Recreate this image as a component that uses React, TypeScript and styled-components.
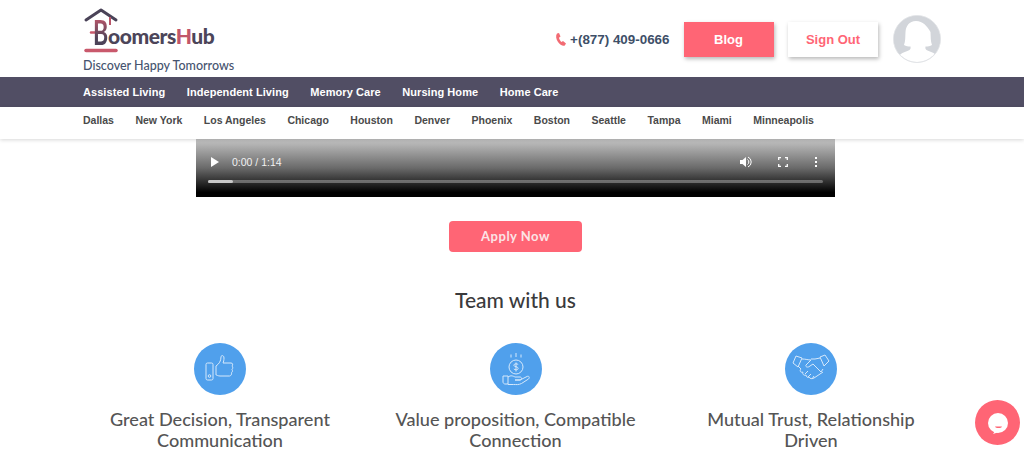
import React from 'react'
import styled, { createGlobalStyle } from 'styled-components'

const mainLinks = ['Assisted Living', 'Independent Living', 'Memory Care', 'Nursing Home', 'Home Care']
const cities = ['Dallas', 'New York', 'Los Angeles', 'Chicago', 'Houston', 'Denver', 'Phoenix', 'Boston', 'Seattle', 'Tampa', 'Miami', 'Minneapolis']

const GlobalStyle = createGlobalStyle`
  html, body {
    margin: 0;
    padding: 0;
    height: 458px;
    overflow: hidden;
    background: #fff;
    font-family: 'Liberation Sans', Arial, sans-serif;
  }
`

const Header = styled.header`
  height: 77px;
  padding: 0 83px 0 83px;
  display: flex;
  justify-content: space-between;
  box-sizing: border-box;
`

const LogoBlock = styled.div`
  display: flex;
  flex-direction: column;
  width: 170px;
`

const LogoMark = styled.div`
  position: relative;
  height: 53px;
  margin-top: 7px;
`

const LogoBig = styled.span`
  position: absolute;
  left: 10px;
  top: 8px;
  font: 700 34px/34px Lato, sans-serif;
  color: transparent;
  background: linear-gradient(#b9566a 10%, #4d4358 70%);
  -webkit-background-clip: text;
  background-clip: text;
  transform: scaleX(0.68);
  transform-origin: left center;
`

const LogoWord = styled.span`
  position: absolute;
  left: 25px;
  top: 15px;
  font: 900 21px/28px Lato, sans-serif;
  letter-spacing: -0.42px;
  color: #4c4559;
  white-space: nowrap;
`

const LogoAccent = styled.span`
  color: #c1566a;
`

const Tagline = styled.div`
  font: 500 12.5px/16px Lato, sans-serif;
  color: #46546f;
  margin-top: -2px;
  white-space: nowrap;
`

const HeaderRight = styled.div`
  display: flex;
  align-items: flex-start;
  padding-top: 15px;
`

const Phone = styled.div`
  display: flex;
  align-items: center;
  gap: 3px;
  height: 34px;
  margin-top: 7px;
  margin-right: 14px;
  font-size: 13.4px;
  font-weight: 700;
  color: #3e4f68;
  white-space: nowrap;
`

const HeaderButton = styled.a<{ $outline?: boolean }>`
  display: flex;
  align-items: center;
  justify-content: center;
  width: 90px;
  height: 35px;
  margin-top: 7px;
  font-size: 13px;
  font-weight: 700;
  color: ${({ $outline }) => ($outline ? '#ff6575' : '#fff')};
  background: ${({ $outline }) => ($outline ? '#fff' : '#ff6575')};
  box-shadow: 1px 2px 4px rgba(0, 0, 0, 0.28);
  margin-left: ${({ $outline }) => ($outline ? '14.500px' : '0')};
`

const Avatar = styled.div`
  width: 48px;
  height: 48px;
  margin-left: 15px;
  border-radius: 50%;
  border: 1px solid #e3e5e8;
  box-sizing: border-box;
  overflow: hidden;
  background: #d2d5da;
`

const MainNav = styled.nav`
  height: 30px;
  box-sizing: border-box;
  padding: 0 0 1px 83px;
  background: #514e64;
  display: flex;
  align-items: center;
  gap: 21.6px;
  font-size: 11px;
  font-weight: 700;
  letter-spacing: 0.06px;
  color: #fff;
`

const CityNav = styled.nav`
  height: 32px;
  box-sizing: border-box;
  padding: 0 0 6px 83px;
  background: #fff;
  display: flex;
  align-items: center;
  gap: 21.5px;
  font-size: 10.5px;
  font-weight: 700;
  color: #4a4a4a;
  box-shadow: 0 1px 4px rgba(0, 0, 0, 0.16);
  position: relative;
  z-index: 1;
`

const Main = styled.main`
  display: flex;
  flex-direction: column;
  align-items: center;
  padding-left: 7px;
`

const Player = styled.div`
  width: 639px;
  height: 58px;
  box-sizing: border-box;
  background: linear-gradient(#c4c4c4, #6a6a6a 50%, #000 92%);
  padding: 15px 12px 0 12px;
  color: #fff;
`

const PlayerRow = styled.div`
  display: flex;
  align-items: center;
  height: 16px;
  padding: 0 5px 0 3px;
  font-size: 10.5px;
`

const TimeText = styled.span`
  margin-left: 13px;
  flex: 1;
  color: #f1f1f1;
`

const PlayerIcons = styled.div`
  display: flex;
  align-items: center;
  gap: 26px;
`

const Track = styled.div`
  margin-top: 10px;
  height: 3px;
  border-radius: 2px;
  background: rgba(255, 255, 255, 0.3);
`

const TrackFill = styled.div`
  height: 3px;
  background: #c8c8c8;
  border-radius: 2px;
`

const ApplyButton = styled.a`
  margin-top: 24px;
  width: 133px;
  height: 31px;
  box-sizing: border-box;
  padding-bottom: 1px;
  border-radius: 4px;
  background: #ff6575;
  color: #fbe4e6;
  display: flex;
  align-items: center;
  justify-content: center;
  font: 700 13px Lato, sans-serif;
  letter-spacing: 0.5px;
`

const Heading = styled.h2`
  margin: 35px 0 0;
  font: 500 21px/26px Lato, sans-serif;
  color: #3a3a3c;
`

const Features = styled.div`
  display: grid;
  grid-template-columns: repeat(3, 295.5px);
  margin-top: 30px;
`

const Feature = styled.div`
  display: flex;
  flex-direction: column;
  align-items: center;
`

const IconCircle = styled.div`
  width: 52px;
  height: 52px;
  border-radius: 50%;
  background: #50a0ec;
  display: flex;
  align-items: center;
  justify-content: center;
`

const FeatureTitle = styled.div`
  margin-top: 14px;
  width: 250px;
  text-align: center;
  font: 500 18.100px/21px Lato, sans-serif;
  color: #555;
`

const ChatBubble = styled.div`
  position: fixed;
  left: 975px;
  top: 400px;
  width: 45px;
  height: 45px;
  border-radius: 50%;
  background: #ff6575;
  display: flex;
  align-items: center;
  justify-content: center;
`

const ThumbsIcon = () => (
  <svg width="34" height="34" viewBox="0 0 34 34" fill="none" stroke="#d5e8fb" strokeWidth="1">
    <rect x="3" y="11" width="7" height="17" rx="1.5" />
    <circle cx="6.5" cy="24" r="1.3" />
    <path d="M13 14c3-2 5-5 5-9 0-2 3-2 3 1 0 2-.5 4-1 5h8c2 0 2 2 1 3 1 1 1 2.5 0 3.5 .8 1 .6 2.5-.5 3.2 .4 1.400-.5 3.300-2 3.300H17c-2 0-3-1-4-1z" />
  </svg>
)

const MoneyIcon = () => (
  <svg width="34" height="38" viewBox="0 0 34 38" fill="none" stroke="#d5e8fb" strokeWidth="1">
    <path d="M17 3v4M12 4.500v3M22 4.500v3" />
    <circle cx="17" cy="17" r="7" />
    <path d="M19.200 14.500c-1-1-4.400-1-4.400 .8s4.400 1 4.400 3-3.400 1.800-4.400 .7M17 12.500v9" />
    <path d="M4 26h5v8H6c-1 0-2-1-2-2zM9 27c3-2 5-1 7 0h5c2 0 2 3 0 3h-5 5l7-3.500c2-1 3 1 1.500 2.500l-7 4.500c-3 1.500-5 1-8 1H9" />
  </svg>
)

const HandshakeIcon = () => (
  <svg width="38" height="32" viewBox="0 0 38 32" fill="none" stroke="#d5e8fb" strokeWidth="1">
    <path d="M1 10l3-7 6 2-4 9zM37 8l-4-6-5 2 4 9z" />
    <path d="M10 6c4 0 6 1 9 1l-5 5c-1 2 2 3 4 1l3-2 8 8 2-3M28 5l-5 1h-4M6 13l3 3M9 16c-2 2 0 4 2 3-1 2 1 4 3 3 0 2 2 3 3 2 1 2 3 2 5 1l9-6" />
    <path d="M13 21l3-3M16 24l3-3M20 26l2-3" />
  </svg>
)

const features = [
  { title: 'Great Decision, Transparent Communication', icon: <ThumbsIcon /> },
  { title: 'Value proposition, Compatible Connection', icon: <MoneyIcon /> },
  { title: 'Mutual Trust, Relationship Driven', icon: <HandshakeIcon /> },
]

export default function App() {
  return (
    <>
      <GlobalStyle />
      <Header>
        <LogoBlock>
          <LogoMark>
            <svg width="110" height="53" viewBox="0 0 110 53" fill="none">
              <path d="M3 13 L18 3 L33 13" stroke="#4a4358" strokeWidth="3" strokeLinecap="round" strokeLinejoin="round" />
              <path d="M27 10v8" stroke="#b9566a" strokeWidth="2" />
              <path d="M8 25.500h6" stroke="#c9596c" strokeWidth="2.500" strokeLinecap="round" />
              <path d="M3 43.500h30" stroke="#c9596c" strokeWidth="3.500" strokeLinecap="round" />
            </svg>
            <LogoBig>B</LogoBig>
            <LogoWord>
              oomers<LogoAccent>H</LogoAccent>ub
            </LogoWord>
          </LogoMark>
          <Tagline>Discover Happy Tomorrows</Tagline>
        </LogoBlock>
        <HeaderRight>
          <Phone>
            <svg width="12" height="15" viewBox="0 0 12 14" fill="#f26b73">
              <path d="M2 1 4 .5 5.500 4 4 5.200c.3 1.500 1.300 3.300 2.500 4.300L8 8.500 11 11l-1.200 2C8 14 5 12.500 3 9.500 1 6.500.5 3 2 1z" />
            </svg>
            +(877) 409-0666
          </Phone>
          <HeaderButton>Blog</HeaderButton>
          <HeaderButton $outline>Sign Out</HeaderButton>
          <Avatar>
            <svg width="46" height="46" viewBox="0 0 46 46">
              <rect width="46" height="46" fill="#d2d5da" />
              <path d="M22 5c-7 0-10 5-10.500 11-.3 5 0 9-1.500 13 2 1 4 1.500 6.500 1.500 .3 2 0 3-2 4-3 1.500-7 2-9 5v7h37v-7c-2-3-6-3.500-9-5-2-1-2.300-2-2-4 2.500 0 4.500-.5 6.500-1.500-1.500-4-1.200-8-1.500-13C33 10 29 5 22 5z" fill="#fff" />
            </svg>
          </Avatar>
        </HeaderRight>
      </Header>
      <MainNav>
        {mainLinks.map((l) => (
          <span key={l}>{l}</span>
        ))}
      </MainNav>
      <CityNav>
        {cities.map((c) => (
          <span key={c}>{c}</span>
        ))}
      </CityNav>
      <Main>
        <Player>
          <PlayerRow>
            <svg width="8" height="10" viewBox="0 0 8 10" fill="#fff">
              <path d="M0 0l8 5-8 5z" />
            </svg>
            <TimeText>0:00 / 1:14</TimeText>
            <PlayerIcons>
              <svg width="12" height="12" viewBox="0 0 12 12" fill="#fff">
                <path d="M0 4h2.500L6 1v10L2.500 8H0z" />
                <path d="M7.500 3.500a3 3 0 0 1 0 5M8 1a5.500 5.500 0 0 1 0 10" stroke="#fff" fill="none" />
              </svg>
              <svg width="10" height="10" viewBox="0 0 10 10" fill="none" stroke="#fff" strokeWidth="1.300">
                <path d="M.7 3V.7H3M7 .7h2.300V3M9.300 7v2.300H7M3 9.300H.7V7" />
              </svg>
              <svg width="4" height="12" viewBox="0 0 4 12" fill="#fff">
                <rect x="1" y="1" width="2" height="2" />
                <rect x="1" y="5" width="2" height="2" />
                <rect x="1" y="9" width="2" height="2" />
              </svg>
            </PlayerIcons>
          </PlayerRow>
          <Track>
            <TrackFill style={{ width: '4%' }} />
          </Track>
        </Player>
        <ApplyButton>Apply Now</ApplyButton>
        <Heading>Team with us</Heading>
        <Features>
          {features.map((f) => (
            <Feature key={f.title}>
              <IconCircle>{f.icon}</IconCircle>
              <FeatureTitle>{f.title}</FeatureTitle>
            </Feature>
          ))}
        </Features>
      </Main>
      <ChatBubble>
        <svg width="24" height="24" viewBox="0 0 24 24">
          <circle cx="12" cy="12" r="10" fill="#fff" />
          <path d="M9 20l-2 3 6-2z" fill="#fff" />
          <path d="M9 15.500h7c-.5 2-6.500 2-7 0z" fill="#ff6575" />
        </svg>
      </ChatBubble>
    </>
  )
}
